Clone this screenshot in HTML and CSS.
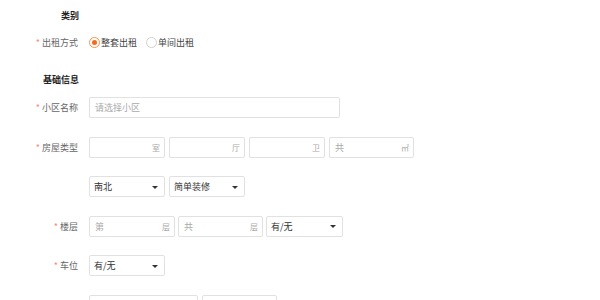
FILE: index.html
```html
<!DOCTYPE html>
<html lang="zh-CN">
<head>
<meta charset="utf-8">
<title>发布房源</title>
<link rel="stylesheet" href="styles.css">
</head>
<body>
<div class="form">
  <div class="section-title"><span class="label-text">类别</span></div>
  <div class="row row-radio">
    <div class="label"><span class="req">*</span>出租方式</div>
    <div class="controls">
      <label class="radio checked"><span class="dot"></span>整套出租</label>
      <label class="radio"><span class="dot"></span>单间出租</label>
    </div>
  </div>
  <div class="section-title second"><span class="label-text">基础信息</span></div>
  <div class="row first-field">
    <div class="label"><span class="req">*</span>小区名称</div>
    <div class="controls">
      <div class="box w251"><span class="ph">请选择小区</span></div>
    </div>
  </div>
  <div class="row">
    <div class="label"><span class="req">*</span>房屋类型</div>
    <div class="controls gap4">
      <div class="box w76 end"><span class="unit">室</span></div>
      <div class="box w76 end"><span class="unit">厅</span></div>
      <div class="box w76 end"><span class="unit">卫</span></div>
      <div class="box w85"><span class="ph">共</span><span class="unit">㎡</span></div>
    </div>
  </div>
  <div class="row">
    <div class="label"></div>
    <div class="controls gap4">
      <div class="box w76 select"><span class="val">南北</span><span class="caret"></span></div>
      <div class="box w76 select"><span class="val">简单装修</span><span class="caret"></span></div>
    </div>
  </div>
  <div class="row">
    <div class="label"><span class="req">*</span>楼层</div>
    <div class="controls gap3">
      <div class="box w86"><span class="ph">第</span><span class="unit">层</span></div>
      <div class="box w85"><span class="ph">共</span><span class="unit">层</span></div>
      <div class="box w77 select"><span class="val">有/无</span><span class="caret"></span></div>
    </div>
  </div>
  <div class="row">
    <div class="label"><span class="req">*</span>车位</div>
    <div class="controls">
      <div class="box w76 select"><span class="val">有/无</span><span class="caret"></span></div>
    </div>
  </div>
  <div class="row">
    <div class="label"></div>
    <div class="controls gap4">
      <div class="box w109"></div>
      <div class="box w75"></div>
    </div>
  </div>
</div>
</body>
</html>
```
FILE: styles.css
```css
* { box-sizing: border-box; }
html, body { margin: 0; padding: 0; background: #fff; }
body {
  font-family: "Noto Sans CJK SC", "Noto Sans", sans-serif;
  font-size: 9px;
  color: #333;
  width: 600px;
  height: 300px;
  overflow: hidden;
}
.form {
  display: flex;
  flex-direction: column;
  padding-top: 6px;
}
.section-title {
  width: 80px;
  height: 20px;
  line-height: 20px;
  text-align: right;
  padding-right: 1px;
  font-weight: bold;
  color: #222;
}
.section-title.second { margin-top: 17px; }
.row {
  display: flex;
  align-items: center;
  height: 21px;
  margin-top: 18.6px;
}
.row-radio { margin-top: 6px; }
.row.first-field { margin-top: 7px; }
.label {
  width: 80px;
  flex: none;
  text-align: right;
  padding-right: 2px;
  color: #666;
  white-space: nowrap;
}
.req {
  color: #f78b80;
  margin-right: 2px;
}
.controls {
  display: flex;
  align-items: center;
  margin-left: 9px;
  height: 100%;
}
.gap4 { gap: 4px; }
.gap3 { gap: 3px; }
.radio {
  display: flex;
  align-items: center;
  color: #444;
  margin-right: 9px;
}
.radio .dot {
  width: 11px;
  height: 11px;
  border-radius: 50%;
  border: 1px solid #d2d2d2;
  margin-right: 1px;
  display: flex;
  align-items: center;
  justify-content: center;
}
.radio.checked .dot {
  border-color: #f7934a;
}
.radio.checked .dot::after {
  content: "";
  width: 5px;
  height: 5px;
  border-radius: 50%;
  background: #f26b1d;
}
.box {
  height: 21px;
  border: 1px solid #e1e1e1;
  border-radius: 2px;
  display: flex;
  align-items: center;
  justify-content: space-between;
  padding: 0 4px 0 5px;
  flex: none;
}
.box.end { justify-content: flex-end; }
.w251 { width: 251px; }
.w76 { width: 76px; }
.w75 { width: 75px; }
.w77 { width: 77px; }
.w85 { width: 85px; }
.w86 { width: 86px; }
.w109 { width: 109px; }
.ph { color: #aaa; }
.unit { color: #aaa; }
.box .unit:last-child { font-size: 8px; }
.val { color: #333; }
.select { padding-right: 6px; padding-left: 4px; }
.caret {
  width: 0;
  height: 0;
  border-left: 3px solid transparent;
  border-right: 3px solid transparent;
  border-top: 3px solid #333;
  margin-top: 1px;
}
```
